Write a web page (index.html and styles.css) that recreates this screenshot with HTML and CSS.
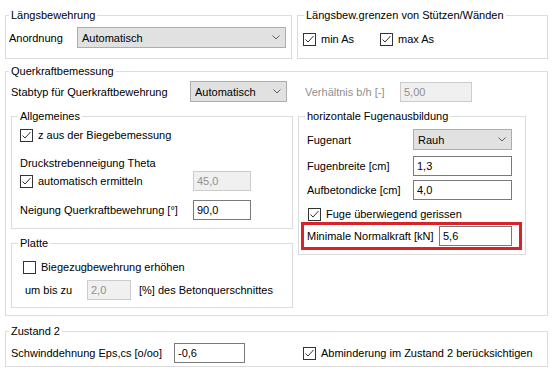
FILE: index.html
```html
<!DOCTYPE html>
<html lang="de">
<head>
  <meta charset="UTF-8">
  <meta name="viewport" content="width=device-width, initial-scale=1.0">
  <title>Bemessung</title>
  <link rel="stylesheet" href="styles.css">
</head>
<body>
  <div class="dialog">

    <div class="top-row">
      <fieldset class="group g-laengs">
        <legend>Längsbewehrung</legend>
        <div class="body">
          <div class="row">
            <span class="lbl-anordnung">Anordnung</span>
            <div class="combo combo-anordnung">
              <span>Automatisch</span>
              <svg class="chevron" width="8" height="5" viewBox="0 0 8 5"><polyline points="0.5,0.5 4,4 7.5,0.5"/></svg>
            </div>
          </div>
        </div>
      </fieldset>

      <fieldset class="group g-grenzen">
        <legend>Längsbew.grenzen von Stützen/Wänden</legend>
        <div class="body">
          <div class="row">
            <label class="check check-minas">
              <span class="box"><svg width="11" height="11" viewBox="0 0 11 11"><polyline points="1.5,5.5 4,8 9.5,2"/></svg></span>min As
            </label>
            <label class="check">
              <span class="box"><svg width="11" height="11" viewBox="0 0 11 11"><polyline points="1.5,5.5 4,8 9.5,2"/></svg></span>max As
            </label>
          </div>
        </div>
      </fieldset>
    </div>

    <fieldset class="group g-querkraft">
      <legend>Querkraftbemessung</legend>
      <div class="body">
        <div class="qk-grid">
          <div class="row">
            <span class="lbl-stabtyp">Stabtyp für Querkraftbewehrung</span>
            <div class="combo combo-stabtyp">
              <span>Automatisch</span>
              <svg class="chevron" width="8" height="5" viewBox="0 0 8 5"><polyline points="0.5,0.5 4,4 7.5,0.5"/></svg>
            </div>
          </div>
          <div class="row row-verhaeltnis">
            <span class="lbl-verhaeltnis muted">Verhältnis b/h [-]</span>
            <input class="field field-verhaeltnis" type="text" value="5,00" disabled>
          </div>

          <div class="stack">
            <fieldset class="group g-allgemein">
              <legend>Allgemeines</legend>
              <div class="body">
                <div class="row">
                  <label class="check">
                    <span class="box"><svg width="11" height="11" viewBox="0 0 11 11"><polyline points="1.5,5.5 4,8 9.5,2"/></svg></span>z aus der Biegebemessung
                  </label>
                </div>
                <div class="caption">Druckstrebenneigung Theta</div>
                <div class="row">
                  <label class="check lbl-allgemein">
                    <span class="box"><svg width="11" height="11" viewBox="0 0 11 11"><polyline points="1.5,5.5 4,8 9.5,2"/></svg></span>automatisch ermitteln
                  </label>
                  <input class="field field-theta" type="text" value="45,0" disabled>
                </div>
                <div class="row row-neigung">
                  <span class="lbl-allgemein">Neigung Querkraftbewehrung [°]</span>
                  <input class="field field-theta" type="text" value="90,0">
                </div>
              </div>
            </fieldset>

            <fieldset class="group g-platte">
              <legend>Platte</legend>
              <div class="body">
                <div class="row">
                  <label class="check">
                    <span class="box"></span>Biegezugbewehrung erhöhen
                  </label>
                </div>
                <div class="row row-umbis">
                  <span class="lbl-umbis">um bis zu</span>
                  <input class="field field-umbis" type="text" value="2,0" disabled>
                  <span class="unit">[%] des Betonquerschnittes</span>
                </div>
              </div>
            </fieldset>
          </div>

          <fieldset class="group g-fugen">
            <legend>horizontale Fugenausbildung</legend>
            <div class="body">
              <div class="row">
                <span class="lbl-fugen">Fugenart</span>
                <div class="combo combo-fugen">
                  <span>Rauh</span>
                  <svg class="chevron" width="8" height="5" viewBox="0 0 8 5"><polyline points="0.5,0.5 4,4 7.5,0.5"/></svg>
                </div>
              </div>
              <div class="row row-breite">
                <span class="lbl-fugen">Fugenbreite [cm]</span>
                <input class="field field-fugen" type="text" value="1,3">
              </div>
              <div class="row row-aufbeton">
                <span class="lbl-fugen">Aufbetondicke [cm]</span>
                <input class="field field-fugen" type="text" value="4,0">
              </div>
              <div class="row row-gerissen">
                <label class="check">
                  <span class="box"><svg width="11" height="11" viewBox="0 0 11 11"><polyline points="1.5,5.5 4,8 9.5,2"/></svg></span>Fuge überwiegend gerissen
                </label>
              </div>
              <div class="highlight">
                <span class="lbl-normalkraft">Minimale Normalkraft [kN]</span>
                <input class="field field-normalkraft" type="text" value="5,6">
              </div>
            </div>
          </fieldset>
        </div>
      </div>
    </fieldset>

    <fieldset class="group g-zustand">
      <legend>Zustand 2</legend>
      <div class="body">
        <div class="row">
          <span class="lbl-schwind">Schwinddehnung Eps,cs [o/oo]</span>
          <input class="field field-schwind" type="text" value="-0,6">
          <label class="check check-abminderung">
            <span class="box"><svg width="11" height="11" viewBox="0 0 11 11"><polyline points="1.5,5.5 4,8 9.5,2"/></svg></span>Abminderung im Zustand 2 berücksichtigen
          </label>
        </div>
      </div>
    </fieldset>

  </div>
</body>
</html>
```

FILE: styles.css
```css
body {
  margin: 0;
  font-family: "Liberation Sans", Arial, sans-serif;
  font-size: 11px;
  color: #000;
  background: #fff;
}

.dialog {
  width: 543px;
  padding: 8px 0 0 5px;
}

/* Gruppenrahmen */
.group {
  margin: 0;
  padding: 0;
  min-width: 0;
  border: 1px solid #dcdcdc;
  box-sizing: border-box;
}

.group > legend {
  padding: 0 2px;
  margin-left: 3px;
  line-height: 14px;
}

.row {
  display: flex;
  align-items: center;
  height: 20px;
}

.muted {
  color: #8f8f8f;
}

/* Eingabefelder */
.field {
  box-sizing: border-box;
  height: 20px;
  margin: 0;
  padding: 0 3px;
  border: 1px solid #7a7a7a;
  background: #fff;
  color: #000;
  font: inherit;
  outline: none;
}

.field:disabled {
  background: #f0f0f0;
  border-color: #cccccc;
  color: #8f8f8f;
}

.combo {
  box-sizing: border-box;
  height: 21px;
  display: flex;
  align-items: center;
  justify-content: space-between;
  padding: 0 5px 0 4px;
  background: #e1e1e1;
  border: 1px solid #adadad;
}

.chevron polyline {
  fill: none;
  stroke: #5f5f5f;
  stroke-width: 1;
}

.check {
  display: flex;
  align-items: center;
  gap: 5px;
}

.box {
  box-sizing: border-box;
  width: 13px;
  height: 13px;
  flex-shrink: 0;
  border: 1px solid #333;
  background: #fff;
}

.box svg {
  display: block;
}

.box polyline {
  fill: none;
  stroke: #333;
  stroke-width: 1;
}

/* obere Zeile */
.top-row {
  display: flex;
  gap: 5px;
}

.g-laengs {
  width: 287px;
}

.g-laengs .body {
  padding: 5px 0 10px 3px;
}

.g-laengs .row {
  height: 21px;
}

.lbl-anordnung {
  width: 68px;
}

.combo-anordnung {
  width: 209px;
}

.g-grenzen {
  width: 251px;
}

.g-grenzen > legend {
  margin-left: 6px;
}

.g-grenzen .body {
  padding: 7px 0 0 5px;
}

.check-minas {
  width: 77px;
}

/* Querkraft */
.g-querkraft {
  margin-top: 5px;
}

.g-querkraft > .body {
  padding: 3px 0 7px 5px;
}

.qk-grid {
  display: grid;
  grid-template-columns: 282px 228px;
  column-gap: 5px;
  row-gap: 7px;
  align-items: start;
}

.qk-grid > .row {
  height: 21px;
}

.lbl-stabtyp {
  width: 179px;
}

.combo-stabtyp {
  width: 97px;
}

.row-verhaeltnis {
  padding-left: 7px;
}

.lbl-verhaeltnis {
  width: 95px;
}

.field-verhaeltnis {
  width: 72px;
}

.stack {
  display: flex;
  flex-direction: column;
  gap: 7px;
}

.g-allgemein > legend,
.g-platte > legend {
  margin-left: 6px;
}

.g-allgemein .body {
  padding: 2px 0 8px 8px;
}

.caption {
  height: 16px;
  line-height: 16px;
  margin-top: 10px;
}

.lbl-allgemein {
  width: 173px;
}

.row-neigung {
  margin-top: 9px;
}

.field-theta {
  width: 58px;
}

.g-platte .body {
  padding: 7px 0 7px 11px;
}

.row-umbis {
  margin-top: 3px;
}

.lbl-umbis {
  width: 62px;
  margin-left: 2px;
}

.field-umbis {
  width: 44px;
}

.unit {
  margin-left: 8px;
}

.g-fugen > legend {
  margin-left: 6px;
}

.g-fugen .body {
  padding: 6px 0 4px 8px;
}

.g-fugen .row:first-child {
  height: 21px;
}

.lbl-fugen {
  width: 106px;
}

.combo-fugen,
.field-fugen {
  width: 99px;
}

.row-breite {
  margin-top: 6px;
}

.row-aufbeton {
  margin-top: 4px;
}

.row-gerissen {
  height: 16px;
  margin-top: 6px;
  padding-left: 1px;
}

/* rote Markierung */
.highlight {
  box-sizing: border-box;
  display: flex;
  align-items: center;
  width: 221px;
  height: 28px;
  margin-left: -6px;
  padding-left: 3px;
  border: 3px solid #d8232a;
}

.lbl-normalkraft {
  width: 132px;
}

.field-normalkraft {
  width: 73px;
}

/* Zustand 2 */
.g-zustand {
  margin-top: 8px;
}

.g-zustand .body {
  padding: 5px 0 3px 5px;
}

.lbl-schwind {
  width: 163px;
}

.field-schwind {
  width: 71px;
}

.check-abminderung {
  margin-left: 58px;
}
```
